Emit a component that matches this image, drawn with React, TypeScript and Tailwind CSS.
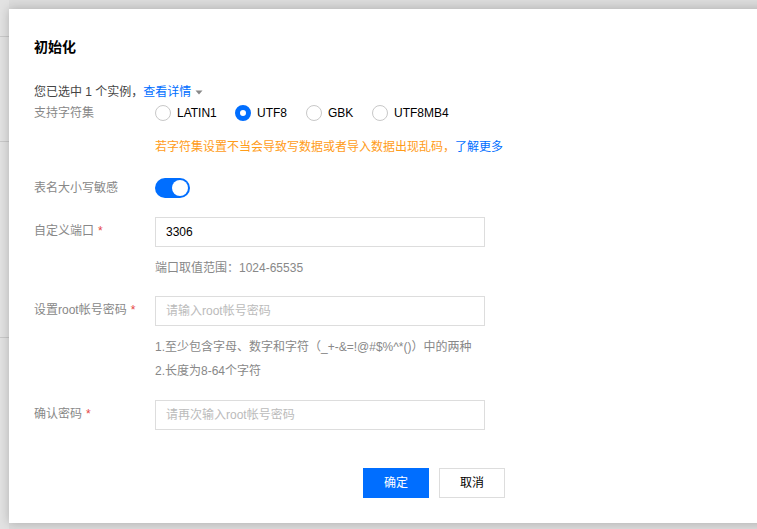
import React from "react";

const font = "font-['Liberation_Sans','Noto_Sans_CJK_SC',sans-serif]";

function Radio({ label, checked, className }: { label: string; checked?: boolean; className?: string }) {
  return (
    <label className={`flex items-center ${className ?? ""}`}>
      {checked
        ? <span className="w-4 h-4 rounded-full border-[5px] border-[#006eff] bg-white box-border" />
        : <span className="w-4 h-4 rounded-full border border-[#c8c8c8] bg-white box-border" />}
      <span className="ml-[6px] text-[#000] text-xs leading-[18px]">{label}</span>
    </label>
  );
}

function Row({ label, required, children, className }: { label: string; required?: boolean; children: React.ReactNode; className?: string }) {
  return (
    <div className={`flex ${className ?? ""}`}>
      <div className="w-[121px] shrink-0 text-xs text-[#888] leading-[18px] pt-[5px]">
        {label}
        {required && <span className="text-[#e54545] ml-1">*</span>}
      </div>
      <div className="flex-1">{children}</div>
    </div>
  );
}

function TextInput({ value, placeholder }: { value?: string; placeholder?: string }) {
  return (
    <div className="w-[330px] h-[30px] border border-[#dddddd] flex items-center px-[10px] text-xs">
      {value
        ? <span className="text-[#000]">{value}</span>
        : <span className="text-[#bbbbbb]">{placeholder}</span>}
    </div>
  );
}

export default function App() {
  return (
    <div className={`relative w-[757px] h-[529px] overflow-hidden bg-[#dcdcdc] ${font}`}>
      {/* page behind the mask */}
      <div className="absolute left-0 top-0 w-[9px] h-full bg-[#e2e2e2] flex flex-col">
        <div className="h-[37px] border-b border-[#c9c9c9]" />
        <div className="h-[105px] border-b border-[#c9c9c9]" />
        <div className="h-[196px] border-b border-[#c9c9c9]" />
      </div>

      {/* dialog */}
      <div className="absolute left-[9px] top-[9px] w-[850px] h-[514px] bg-white shadow-[0_0_10px_rgba(0,0,0,0.22)] px-[25px] pt-[28px]">
        <h2 className="text-sm font-bold text-[#000] leading-5">初始化</h2>

        <div className="mt-[26px] text-xs leading-[18px] text-[#444] flex items-center">
          <span>您已选中 1 个实例，</span>
          <span className="text-[#006eff]">查看详情</span>
          <svg width="10" height="10" viewBox="0 0 10 10" className="ml-[3px]">
            <path d="M1.5 3.5h7L5 7.5z" fill="#888" />
          </svg>
        </div>

        <div className="mt-[3px] flex">
          <div className="w-[121px] shrink-0 text-xs text-[#888] leading-[18px]">支持字符集</div>
          <div className="flex items-center h-[18px]">
            <Radio label="LATIN1" className="w-[80px]" />
            <Radio label="UTF8" checked className="w-[71px]" />
            <Radio label="GBK" className="w-[66px]" />
            <Radio label="UTF8MB4" />
          </div>
        </div>

        <div className="mt-4 ml-[121px] text-xs leading-[18px] text-[#ff9c19]">
          若字符集设置不当会导致写数据或者导入数据出现乱码，
          <span className="text-[#006eff]">了解更多</span>
        </div>

        <div className="mt-[22px] flex items-center h-5">
          <div className="w-[121px] shrink-0 text-xs text-[#888] leading-[18px]">表名大小写敏感</div>
          <div className="w-[35px] h-5 rounded-full bg-[#006eff] flex items-center justify-end pr-[2px]">
            <span className="w-4 h-4 rounded-full bg-white" />
          </div>
        </div>

        <Row label="自定义端口" required className="mt-[19px]">
          <TextInput value="3306" />
          <div className="mt-[9px] text-xs leading-6 text-[#888]">端口取值范围：1024-65535</div>
        </Row>

        <Row label="设置root帐号密码" required className="mt-4">
          <TextInput placeholder="请输入root帐号密码" />
          <div className="mt-[9px] text-xs leading-6 text-[#888]">
            <div>1.至少包含字母、数字和字符（_+-&=!@#$%^*()）中的两种</div>
            <div>2.长度为8-64个字符</div>
          </div>
        </Row>

        <Row label="确认密码" required className="mt-[17px]">
          <TextInput placeholder="请再次输入root帐号密码" />
        </Row>

        <div className="mt-[38px] flex justify-center gap-[10px]">
          <button className="w-[66px] h-[30px] bg-[#006eff] text-white text-xs">确定</button>
          <button className="w-[66px] h-[30px] bg-white border border-[#dddddd] text-[#000] text-xs">取消</button>
        </div>
      </div>
    </div>
  );
}
